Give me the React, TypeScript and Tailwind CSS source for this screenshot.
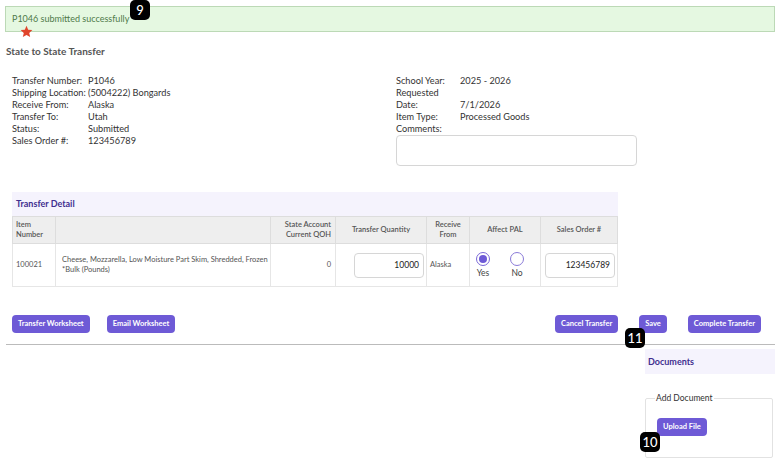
const purple = "bg-[#6e5ad6]";

function Badge({ label, className }: { label: string; className: string }) {
  return (
    <div
      className={`absolute flex items-center justify-center rounded-[5px] bg-black text-white text-[13px] leading-none font-medium ${className}`}
    >
      {label}
    </div>
  );
}

function Btn({ children }: { children: React.ReactNode }) {
  return (
    <button
      className={`${purple} h-[18px] rounded-[4px] px-[6px] text-[7.5px] font-bold text-white leading-none`}
    >
      {children}
    </button>
  );
}

const leftInfo = [
  ["Transfer Number:", "P1046"],
  ["Shipping Location:", "(5004222) Bongards"],
  ["Receive From:", "Alaska"],
  ["Transfer To:", "Utah"],
  ["Status:", "Submitted"],
  ["Sales Order #:", "123456789"],
];

export default function App() {
  return (
    <div
      className="relative w-[780px] h-[472px] bg-white text-[#333] overflow-hidden"
      style={{ fontFamily: "Lato, 'Noto Sans', sans-serif" }}
    >
      {/* success banner */}
      <div className="pt-[6px] px-[5px]">
        <div className="h-[26px] flex items-center pl-[6px] border border-[#bcd9b6] bg-[#e5f8e1] text-[#4f7a4a] text-[9px]">
          P1046 submitted successfully
        </div>
      </div>
      <Badge label="9" className="left-[130px] top-0 w-[20px] h-[20px]" />
      <svg className="absolute left-[20px] top-[25px]" width="13" height="13" viewBox="0 0 24 24">
        <path
          d="M12 1.5l3.1 7.2 7.8.7-5.9 5.2 1.8 7.7L12 18.3l-6.8 4 1.8-7.7L1.1 9.4l7.8-.7z"
          fill="#e0452c"
        />
      </svg>

      <h1 className="mt-[12px] ml-[6px] text-[10px] font-bold text-[#555]">State to State Transfer</h1>

      {/* info */}
      <div className="flex mt-[16px] text-[9.2px] leading-[12px] text-[#333] whitespace-nowrap">
        <div className="w-[396px] pl-[12px]">
          {leftInfo.map(([k, v]) => (
            <div key={k} className="flex">
              <span className="w-[76px] shrink-0">{k}</span>
              <span>{v}</span>
            </div>
          ))}
        </div>
        <div className="w-[241px]">
          <div className="flex">
            <span className="w-[64px] shrink-0">School Year:</span>
            <span>2025 - 2026</span>
          </div>
          <div>Requested</div>
          <div className="flex">
            <span className="w-[64px] shrink-0">Date:</span>
            <span>7/1/2026</span>
          </div>
          <div className="flex">
            <span className="w-[64px] shrink-0">Item Type:</span>
            <span>Processed Goods</span>
          </div>
          <div>Comments:</div>
          <div className="h-[31px] w-[241px] rounded-[4px] border border-[#d6d6d6]" />
        </div>
      </div>

      {/* transfer detail */}
      <div className="ml-[12px] mt-[26px] w-[606px]">
        <div className="h-[24px] flex items-center pl-[4px] bg-[#f5f3fd] text-[9px] font-bold text-[#3f2f8f]">
          Transfer Detail
        </div>
        <table className="w-full border-collapse text-[7.5px] text-[#555]">
          <thead>
            <tr className="h-[27px] bg-[#eeeeee] font-semibold leading-[10px]">
              <th className="w-[43px] border border-[#dddddd] text-left pl-[3px] font-semibold">
                Item
                <br />
                Number
              </th>
              <th className="w-[215px] border border-[#dddddd]" />
              <th className="w-[65px] border border-[#dddddd] font-semibold text-right pr-[4px]">
                State Account
                <br />
                Current QOH
              </th>
              <th className="w-[91px] border border-[#dddddd] font-semibold">Transfer Quantity</th>
              <th className="w-[43px] border border-[#dddddd] font-semibold">
                Receive
                <br />
                From
              </th>
              <th className="w-[71px] border border-[#dddddd] font-semibold">Affect PAL</th>
              <th className="border border-[#dddddd] font-semibold">Sales Order #</th>
            </tr>
          </thead>
          <tbody>
            <tr className="h-[43px] leading-[10px]">
              <td className="border border-[#e6e6e6] pl-[3px]">100021</td>
              <td className="border border-[#e6e6e6] pl-[6px]">
                Cheese, Mozzarella, Low Moisture Part Skim, Shredded, Frozen
                <br />
                *Bulk (Pounds)
              </td>
              <td className="border border-[#e6e6e6] text-right pr-[4px]">0</td>
              <td className="border border-[#e6e6e6]">
                <div className="ml-[18px] w-[70px] h-[25px] flex items-center justify-end pr-[4px] rounded-[4px] border border-[#d6d6d6] text-[8.5px] text-[#222]">
                  10000
                </div>
              </td>
              <td className="border border-[#e6e6e6] pl-[3px]">Alaska</td>
              <td className="border border-[#e6e6e6]">
                <div className="flex gap-[20px] pl-[6px] text-[8.5px] text-[#444]">
                  <div className="flex flex-col items-center gap-[2px]">
                    <span className="w-[14px] h-[14px] rounded-full border border-[#7a68d8] flex items-center justify-center">
                      <span className="w-[8px] h-[8px] rounded-full bg-[#6e5ad6]" />
                    </span>
                    Yes
                  </div>
                  <div className="flex flex-col items-center gap-[2px]">
                    <span className="w-[14px] h-[14px] rounded-full border border-[#8a7ad8]" />
                    No
                  </div>
                </div>
              </td>
              <td className="border border-[#e6e6e6]">
                <div className="ml-[4px] w-[70px] h-[25px] flex items-center justify-end pr-[4px] rounded-[4px] border border-[#d6d6d6] text-[8.5px] text-[#222]">
                  123456789
                </div>
              </td>
            </tr>
          </tbody>
        </table>
      </div>

      {/* actions */}
      <div className="flex items-center mt-[28px] pl-[12px] w-[761px]">
        <div className="flex gap-[17px]">
          <Btn>Transfer Worksheet</Btn>
          <Btn>Email Worksheet</Btn>
        </div>
        <div className="ml-auto flex gap-[21px]">
          <Btn>Cancel Transfer</Btn>
          <Btn>Save</Btn>
          <Btn>Complete Transfer</Btn>
        </div>
      </div>
      <div className="mt-[11px] mx-[6px] w-[769px] border-t border-[#bbbbbb]" />
      <Badge label="11" className="left-[625px] top-[328px] w-[20px] h-[20px]" />

      {/* documents */}
      <div className="ml-[645px] mt-[4px] w-[130px]">
        <div className="h-[25px] flex items-center pl-[3px] bg-[#f5f3fd] text-[9px] font-bold text-[#3f2f8f]">
          Documents
        </div>
        <fieldset className="mt-[18px] w-[128px] h-[66px] border border-[#e2e2e2] rounded-[2px] pl-[11px]">
          <legend className="px-[1px] -ml-[2px] text-[8.5px] text-[#333]">Add Document</legend>
          <div className="mt-[6px]">
            <Btn>Upload File</Btn>
          </div>
        </fieldset>
      </div>
      <Badge label="10" className="left-[640px] top-[432px] w-[20px] h-[20px]" />
    </div>
  );
}
